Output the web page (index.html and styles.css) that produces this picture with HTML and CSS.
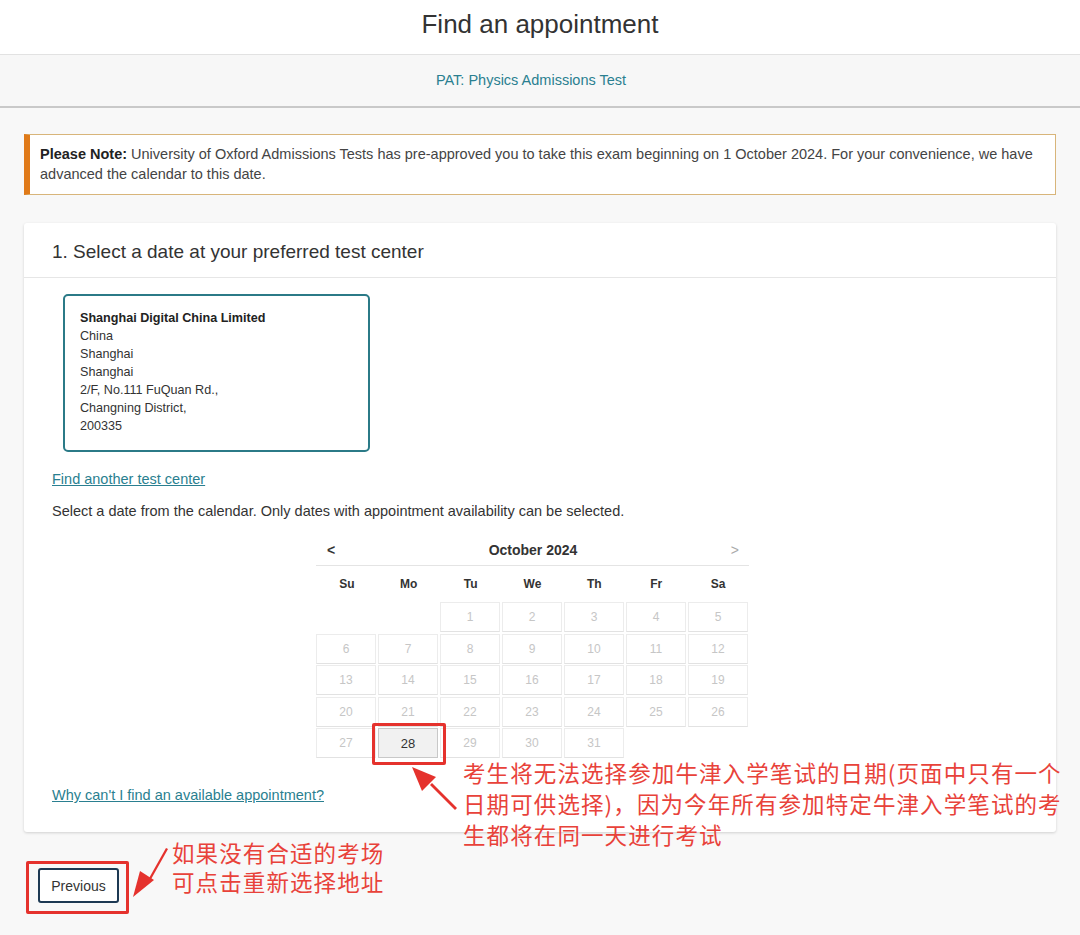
FILE: index.html
```html
<!DOCTYPE html>
<html lang="en">
<head>
<meta charset="utf-8">
<title>Find an appointment</title>
<link rel="stylesheet" href="styles.css">
</head>
<body>
<header class="top">
  <h1 class="title">Find an appointment</h1>
</header>
<div class="exam-bar">PAT: Physics Admissions Test</div>

<main class="main">
  <div class="note">
    <p class="note-text"><b>Please Note:</b> University of Oxford Admissions Tests has pre-approved you to take this exam beginning on 1 October 2024. For your convenience, we have advanced the calendar to this date.</p>
  </div>

  <section class="card">
    <h2 class="card-title">1. Select a date at your preferred test center</h2>
    <div class="card-body">
      <div class="center-box">
        <div class="center-name">Shanghai Digital China Limited</div>
        <div>China</div>
        <div>Shanghai</div>
        <div>Shanghai</div>
        <div>2/F, No.111 FuQuan Rd.,</div>
        <div>Changning District,</div>
        <div>200335</div>
      </div>
      <a class="link find-link" href="#">Find another test center</a>
      <p class="hint">Select a date from the calendar. Only dates with appointment availability can be selected.</p>

      <div class="calendar">
        <div class="cal-head">
          <span class="nav prev">&lt;</span>
          <span class="month">October 2024</span>
          <span class="nav next">&gt;</span>
        </div>
        <div class="dow">
          <span>Su</span><span>Mo</span><span>Tu</span><span>We</span><span>Th</span><span>Fr</span><span>Sa</span>
        </div>
        <div class="days">
          <span class="blank"></span><span class="blank"></span>
          <span class="day">1</span><span class="day">2</span><span class="day">3</span><span class="day">4</span><span class="day">5</span>
          <span class="day">6</span><span class="day">7</span><span class="day">8</span><span class="day">9</span><span class="day">10</span><span class="day">11</span><span class="day">12</span>
          <span class="day">13</span><span class="day">14</span><span class="day">15</span><span class="day">16</span><span class="day">17</span><span class="day">18</span><span class="day">19</span>
          <span class="day">20</span><span class="day">21</span><span class="day">22</span><span class="day">23</span><span class="day">24</span><span class="day">25</span><span class="day">26</span>
          <span class="day">27</span><span class="day available">28</span><span class="day">29</span><span class="day">30</span><span class="day">31</span>
        </div>
      </div>

      <a class="link why-link" href="#">Why can't I find an available appointment?</a>
    </div>
  </section>

  <div class="actions">
    <button class="btn-prev" type="button">Previous</button>
  </div>
</main>

<!-- annotation overlay -->
<div class="mark mark-day"></div>
<div class="mark mark-prev"></div>
<p class="anno anno-day">考生将无法选择参加牛津入学笔试的日期(页面中只有一个<br>日期可供选择)，因为今年所有参加特定牛津入学笔试的考<br>生都将在同一天进行考试</p>
<p class="anno anno-prev">如果没有合适的考场<br>可点击重新选择地址</p>
<svg class="arrow arrow-day" width="60" height="60" viewBox="0 0 60 60">
  <polygon points="49,47 24,22 26,20 51,45" fill="#e5322d"/>
  <polygon points="6,4 30,14 16,28" fill="#e5322d"/>
</svg>
<svg class="arrow arrow-prev" width="50" height="60" viewBox="0 0 50 60">
  <polygon points="40,3 42,4 24,36 22,35" fill="#e5322d"/>
  <polygon points="7,52 14,26 28,35" fill="#e5322d"/>
</svg>
</body>
</html>
```

FILE: styles.css
```css
* { box-sizing: border-box; }

body {
  margin: 0;
  position: relative;
  background: #f8f8f8;
  font-family: "Liberation Sans", Arial, "Noto Sans CJK SC", sans-serif;
  color: #333;
  min-height: 935px;
}

.top {
  background: #fff;
  height: 55px;
  border-bottom: 1px solid #e2e2e2;
  display: flex;
  justify-content: center;
}

.title {
  margin: 0;
  padding-top: 8px;
  font-size: 26px;
  font-weight: normal;
  line-height: 32px;
  color: #333;
}

.exam-bar {
  height: 53px;
  background: #f7f7f7;
  border-bottom: 2px solid #c9c9c9;
  text-align: center;
  padding-right: 18px;
  font-size: 14.5px;
  line-height: 50px;
  color: #2a7f90;
}

.main {
  padding: 26px 24px 0;
}

.note {
  background: #fff;
  border: 1px solid #d8b57a;
  border-left: 6px solid #e07a19;
  padding: 9px 16px 10px 10px;
}

.note-text {
  margin: 0;
  font-size: 14.5px;
  line-height: 20px;
  color: #444;
}

.note-text b { color: #222; }

.card {
  margin-top: 28px;
  background: #fff;
  border-radius: 3px;
  box-shadow: 0 1px 3px rgba(0,0,0,0.16);
}

.card-title {
  margin: 0;
  height: 55px;
  padding: 17px 28px 0;
  font-size: 19px;
  font-weight: normal;
  line-height: 24px;
  color: #333;
  border-bottom: 1px solid #e6e6e6;
}

.card-body {
  padding: 16px 28px 27px;
  display: flex;
  flex-direction: column;
  align-items: flex-start;
}

.center-box {
  margin-left: 11px;
  width: 307px;
  height: 158px;
  border: 2px solid #2b7a87;
  border-radius: 5px;
  padding: 13px 15px;
  font-size: 12.6px;
  line-height: 18px;
  color: #333;
}

.center-name { font-weight: bold; color: #222; }

.link {
  color: #2a7f90;
  text-decoration: underline;
  font-size: 14.5px;
  line-height: 20px;
}

.find-link { margin-top: 17px; }

.hint {
  margin: 12px 0 0;
  font-size: 14.5px;
  line-height: 20px;
  color: #333;
}

.calendar {
  margin-left: 264px;
  margin-top: 13px;
  width: 433px;
}

.cal-head {
  height: 32px;
  border-bottom: 1px solid #e4e4e4;
  display: flex;
  align-items: center;
  justify-content: space-between;
  padding: 0 10px 0 11px;
}

.month {
  font-weight: bold;
  font-size: 14px;
  color: #333;
}

.nav { font-size: 14px; font-weight: bold; color: #333; }
.nav.next { font-weight: normal; color: #aaa; }

.dow {
  display: grid;
  grid-template-columns: repeat(7, 1fr);
  height: 36px;
  align-items: center;
  text-align: center;
  font-size: 12px;
  font-weight: bold;
  color: #333;
}

.days {
  display: grid;
  grid-template-columns: repeat(7, 60px);
  grid-auto-rows: 30px;
  column-gap: 2px;
  row-gap: 1.6px;
}

.day {
  display: flex;
  align-items: center;
  justify-content: center;
  border: 1px solid #ececec;
  border-bottom-color: #e2e2e2;
  font-size: 12px;
  color: #c6c6c6;
  background: #fff;
}

.day.available {
  background: #f1f1f1;
  border-color: #c8c8c8;
  color: #333;
  font-size: 13px;
}

.why-link { margin-top: 27px; }

.actions {
  padding: 36px 0 30px 14px;
}

.btn-prev {
  width: 81px;
  height: 35px;
  border: 2px solid #1d3953;
  border-radius: 3px;
  background: #fff;
  font-family: "Liberation Sans", Arial, sans-serif;
  font-size: 14px;
  color: #333;
  padding: 0;
}

/* annotation overlay */
.mark {
  position: absolute;
  border: 3px solid #e5322d;
  border-radius: 2px;
}

.mark-day { left: 372px; top: 723px; width: 74px; height: 42px; }
.mark-prev { left: 26px; top: 861px; width: 103px; height: 53px; }

.anno {
  position: absolute;
  margin: 0;
  color: #e8423a;
  font-family: "Noto Sans CJK SC", "Liberation Sans", sans-serif;
  font-size: 22.5px;
  letter-spacing: 1.1px;
  white-space: nowrap;
}

.anno-day { left: 463px; top: 757px; line-height: 31px; }
.anno-prev { left: 172px; top: 838px; line-height: 29px; }

.arrow { position: absolute; }
.arrow-day { left: 406px; top: 763px; }
.arrow-prev { left: 126px; top: 845px; }
```
